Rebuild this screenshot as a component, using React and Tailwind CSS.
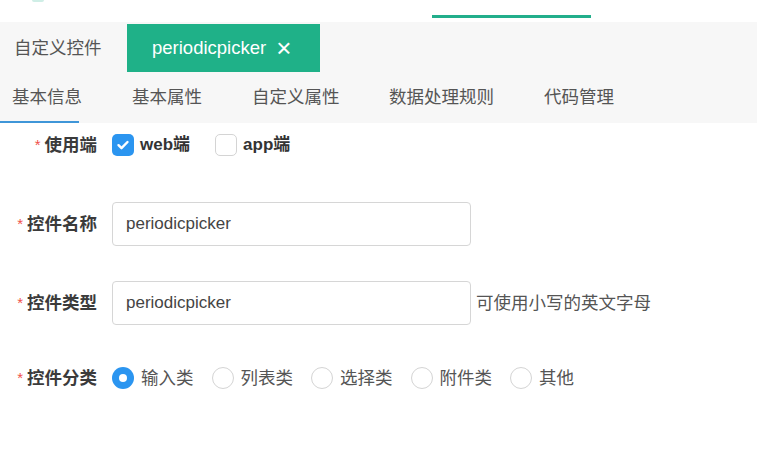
import React, { useState } from 'react'

const font = { fontFamily: '"Liberation Sans", "Noto Sans CJK SC", sans-serif' }

function Label({ children }) {
  return (
    <div className="w-[97px] shrink-0 flex justify-end items-center mr-[15px] text-[17.5px] font-bold text-[#3b3b3b]">
      <span className="text-[#f0504a] font-normal mr-[4px] text-[15px]">*</span>
      {children}
    </div>
  )
}

function Check({ checked, label }) {
  return (
    <label className="flex items-center mr-[25px]">
      <span className={'w-[22px] h-[22px] rounded-[5px] flex items-center justify-center ' + (checked ? 'bg-[#2b95f0]' : 'bg-white border border-[#d4d4d4]')}>
        {checked && (
          <svg width="14" height="14" viewBox="0 0 14 14" fill="none">
            <path d="M2.5 7.2l3 3L11.5 4" stroke="white" strokeWidth="2.4" strokeLinecap="round" strokeLinejoin="round" />
          </svg>
        )}
      </span>
      <span className="ml-[6px] text-[17px] font-bold text-[#333]">{label}</span>
    </label>
  )
}

function Radio({ checked, label }) {
  return (
    <label className="flex items-center mr-[18px]">
      <span className={'w-[22px] h-[22px] rounded-full flex items-center justify-center ' + (checked ? 'bg-[#2b95f0]' : 'bg-white border border-[#d4d4d4]')}>
        {checked && <span className="w-[8px] h-[8px] rounded-full bg-white" />}
      </span>
      <span className="ml-[7px] text-[17.5px] text-[#555]">{label}</span>
    </label>
  )
}

export default function App() {
  const [name, setName] = useState('periodicpicker')
  const [type, setType] = useState('periodicpicker')
  const subTabs = [
    ['基本信息', 'w-[132px] pl-[12px]'],
    ['基本属性', 'w-[120px]'],
    ['自定义属性', 'w-[137px]'],
    ['数据处理规则', 'w-[155px]'],
    ['代码管理', 'w-[100px]']
  ]

  return (
    <div className="w-[757px] h-[466px] bg-white overflow-hidden" style={font}>
      <div className="h-[22px] relative">
        <div className="absolute left-[32px] top-0 w-[12px] h-[2px] rounded-b-full bg-[#cfeee6]" />
        <div className="ml-[432px] pt-[15px]">
          <div className="w-[159px] h-[3px] bg-[#22ae8b]" />
        </div>
      </div>
      <div className="bg-[#f7f7f7] h-[101px] pt-[2px]">
        <div className="flex h-[48px] items-center">
          <div className="pl-[14px] w-[127px] text-[17.5px] text-[#555]">自定义控件</div>
          <div className="h-full w-[193px] bg-[#1fb188] flex items-center pl-[25px] text-white text-[18.5px]">
            periodicpicker
            <span className="ml-[10px] text-[26px] leading-none font-light">×</span>
          </div>
        </div>
        <div className="flex h-[51px]">
          {subTabs.map(([t, cls], i) => (
            <div key={t} className={'relative flex items-center text-[17.5px] text-[#555] ' + cls}>
              {t}
              {i === 0 && <div className="absolute left-0 bottom-0 w-[79px] h-[2px] bg-[#3f96d8]" />}
            </div>
          ))}
        </div>
      </div>
      <div>
        <div className="flex items-center h-[44px]">
          <Label>使用端</Label>
          <Check checked label="web端" />
          <Check label="app端" />
        </div>
        <div className="flex items-center h-[44px] mt-[35px]">
          <Label>控件名称</Label>
          <input
            value={name}
            onChange={e => setName(e.target.value)}
            className="w-[359px] h-[44px] border border-[#d6d6d6] rounded-[4px] px-[13px] text-[17px] text-[#444] outline-none"
          />
        </div>
        <div className="flex items-center h-[44px] mt-[35px]">
          <Label>控件类型</Label>
          <input
            value={type}
            onChange={e => setType(e.target.value)}
            className="w-[359px] h-[44px] border border-[#d6d6d6] rounded-[4px] px-[13px] text-[17px] text-[#444] outline-none"
          />
          <span className="ml-[5px] text-[17.5px] text-[#555]">可使用小写的英文字母</span>
        </div>
        <div className="flex items-center h-[44px] mt-[31px]">
          <Label>控件分类</Label>
          <Radio checked label="输入类" />
          <Radio label="列表类" />
          <Radio label="选择类" />
          <Radio label="附件类" />
          <Radio label="其他" />
        </div>
      </div>
    </div>
  )
}
